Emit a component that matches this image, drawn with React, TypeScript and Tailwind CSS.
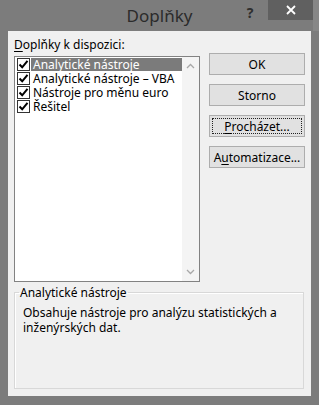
import React from "react";

const font = { fontFamily: '"Noto Sans", "Open Sans", sans-serif' };

function Check() {
  return (
    <span className="w-[13px] h-[13px] border border-[#333] bg-white flex items-center justify-center shrink-0">
      <svg width="11" height="11" viewBox="0 0 11 11">
        <path d="M1.5 5.5 L4.2 8.3 L9.5 1.8" fill="none" stroke="#000" strokeWidth="2" />
      </svg>
    </span>
  );
}

function Row({ text, selected }: { text: string; selected?: boolean }) {
  return (
    <div className="h-[14px] flex items-center pl-[2px] leading-[13px]">
      <Check />
      <div
        className={
          "ml-[1px] h-[13px] flex-1 flex items-center pl-[2px] whitespace-nowrap " +
          (selected ? "bg-[#7b7b7b] text-white" : "text-black")
        }
      >
        {text}
      </div>
    </div>
  );
}

function Btn({ children, focus }: { children: React.ReactNode; focus?: boolean }) {
  return (
    <div className="h-[22px] bg-[#e1e1e1] border border-[#adadad] p-[2px] flex">
      <div
        className={
          "flex-1 flex items-center justify-center text-black " +
          (focus ? "border border-dotted border-[#222]" : "border border-transparent")
        }
      >
        {children}
      </div>
    </div>
  );
}

export default function App() {
  return (
    <div className="w-[319px] h-[405px] bg-[#7c7c7c] flex flex-col text-[12px] leading-[15px]" style={font}>
      <div className="h-[31px] grid grid-cols-[1fr_auto_1fr] items-start">
        <div />
        <div className="text-[17px] leading-[22px] text-[#2b2b2b] pt-[5px]">Doplňky</div>
        <div className="flex justify-end items-start">
          <div className="w-[30px] h-[20px] flex items-center justify-center text-[14px] font-bold text-[#2e2e2e] mr-[3px] mt-[2px]">?</div>
          <div className="w-[45px] h-[20px] bg-[#606060] flex items-center justify-center">
            <svg width="10" height="10" viewBox="0 0 10 10">
              <path d="M1 1 L9 9 M9 1 L1 9" stroke="#fff" strokeWidth="1.8" />
            </svg>
          </div>
          <div className="w-[6px] h-[31px] bg-[#878787]" />
        </div>
      </div>
      <div className="mx-[8px] h-[365px] bg-[#f0f0f0] flex flex-col pl-[6px]">
        <div className="flex">
          <div className="w-[186px] flex flex-col">
            <div className="h-[25px] pt-[6px] text-black">
              <span className="underline underline-offset-2">D</span>oplňky k dispozici:
            </div>
            <div className="h-[226px] border border-[#828282] bg-white flex">
              <div className="flex-1 flex flex-col">
                <Row text="Analytické nástroje" selected />
                <Row text="Analytické nástroje – VBA" />
                <Row text="Nástroje pro měnu euro" />
                <Row text="Řešitel" />
              </div>
              <div className="w-[17px] bg-[#f4f4f4] flex flex-col justify-between items-center py-[6px]">
                <svg width="9" height="6" viewBox="0 0 9 6">
                  <path d="M1 5 L4.5 1.5 L8 5" fill="none" stroke="#a8a8a8" strokeWidth="1.3" />
                </svg>
                <svg width="9" height="6" viewBox="0 0 9 6">
                  <path d="M1 1 L4.5 4.5 L8 1" fill="none" stroke="#a8a8a8" strokeWidth="1.3" />
                </svg>
              </div>
            </div>
          </div>
          <div className="ml-[9px] w-[96px] flex flex-col gap-[9px] pt-[22px]">
            <Btn>OK</Btn>
            <Btn>Storno</Btn>
            <Btn focus>
              <span className="underline underline-offset-2">P</span>rocházet...
            </Btn>
            <Btn>
              A<span className="underline underline-offset-2">u</span>tomatizace...
            </Btn>
          </div>
        </div>
        <fieldset className="mt-[3px] w-[290px] h-[104px] border border-[#d8d8d8] shadow-[inset_1px_1px_0_#ffffff] pl-[8px] pt-[5px]">
          <legend className="-ml-[4px] px-[1px] text-black">Analytické nástroje</legend>
          <div className="text-black">
            Obsahuje nástroje pro analýzu statistických a
            <br />
            inženýrských dat.
          </div>
        </fieldset>
      </div>
    </div>
  );
}
